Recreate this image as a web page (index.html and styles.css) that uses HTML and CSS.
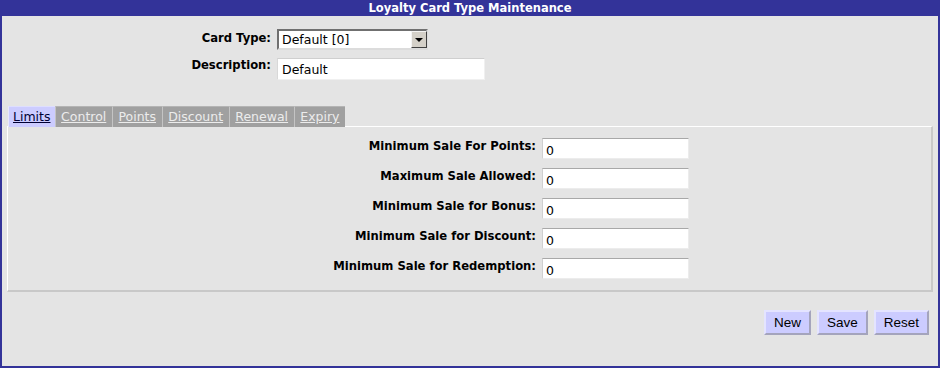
FILE: index.html
```html
<!DOCTYPE html>
<html lang="en">
<head>
    <meta charset="UTF-8">
    <title>Loyalty Card Type Maintenance</title>
    <link rel="stylesheet" href="styles.css">
</head>
<body>
    <div class="page">
        <div class="title-bar">Loyalty Card Type Maintenance</div>
        <div class="card-head">
            <label class="head-label">Card Type:</label>
            <span class="select-wrap">
                <select class="card-select">
                    <option>Default [0]</option>
                </select>
                <span class="select-arrow"></span>
            </span>
            <label class="head-label desc-label">Description:</label>
            <input type="text" class="desc-input" value="Default">
        </div>
        <div class="tab-box">
            <div class="tabs">
                <a href="#" class="tab active">Limits</a>
                <a href="#" class="tab">Control</a>
                <a href="#" class="tab">Points</a>
                <a href="#" class="tab">Discount</a>
                <a href="#" class="tab">Renewal</a>
                <a href="#" class="tab">Expiry</a>
            </div>
            <div class="tab-panel">
                <div class="field-grid">
                    <label>Minimum Sale For Points:</label>
                    <input type="text" value="0">
                    <label>Maximum Sale Allowed:</label>
                    <input type="text" value="0">
                    <label>Minimum Sale for Bonus:</label>
                    <input type="text" value="0">
                    <label>Minimum Sale for Discount:</label>
                    <input type="text" value="0">
                    <label>Minimum Sale for Redemption:</label>
                    <input type="text" value="0">
                </div>
            </div>
        </div>
        <div class="actions">
            <button>New</button>
            <button>Save</button>
            <button>Reset</button>
        </div>
    </div>
</body>
</html>
```

FILE: styles.css
```css
      body {
          margin: 0;
          padding: 0;
          font-family: 'DejaVu Sans', Verdana, sans-serif;
          background-color: #e4e4e4;
      }
      .page {
          box-sizing: border-box;
          height: 100vh;
          border: 2px solid #333399;
          border-top: none;
          background-color: #e4e4e4;
      }
      .title-bar {
          height: 16px;
          line-height: 16px;
          background-color: #333399;
          color: white;
          font-weight: bold;
          font-size: 11.5px;
          text-align: center;
      }
      .card-head {
          display: grid;
          grid-template-columns: 269px auto;
          column-gap: 6px;
          row-gap: 8px;
          margin-top: 13px;
          justify-items: start;
      }
      .head-label {
          justify-self: end;
          font-weight: bold;
          font-size: 11.6px;
          padding-top: 2px;
      }
      .desc-label {
          padding-top: 0;
      }
      .select-wrap {
          position: relative;
          display: block;
      }
      .card-select {
          appearance: none;
          -webkit-appearance: none;
          box-sizing: border-box;
          width: 151px;
          height: 21px;
          margin: 0;
          padding: 0 3px;
          font-family: 'DejaVu Sans', Verdana, sans-serif;
          font-size: 12.5px;
          color: black;
          background-color: white;
          border: 2px solid;
          border-color: #707070 #dcdcdc #dcdcdc #707070;
          border-radius: 0;
          outline: none;
      }
      .select-arrow {
          position: absolute;
          top: 2px;
          right: 1px;
          box-sizing: border-box;
          width: 16px;
          height: 17px;
          background-color: #d4d0c8;
          border: 1px solid;
          border-color: #f4f4f4 #404040 #404040 #f4f4f4;
          pointer-events: none;
      }
      .select-arrow::after {
          content: '';
          position: absolute;
          left: 3px;
          top: 6px;
          border-left: 4px solid transparent;
          border-right: 4px solid transparent;
          border-top: 4px solid black;
      }
      .desc-input {
          box-sizing: border-box;
          width: 208px;
          height: 22px;
          margin: 0;
          padding: 0 4px;
          font-family: 'DejaVu Sans', Verdana, sans-serif;
          font-size: 12.5px;
          background-color: white;
          border: 1px solid;
          border-color: #cfcfcf #f0f0f0 #f0f0f0 #d8d8d8;
          outline: none;
      }
      .tab-box {
          margin: 26px 5px 0;
      }
      .tabs {
          display: flex;
          padding-left: 1px;
          margin-bottom: -1px;
          position: relative;
      }
      .tab {
          box-sizing: border-box;
          height: 21px;
          line-height: 20px;
          padding: 0 5.6px;
          font-size: 12.5px;
          color: #ececec;
          background-color: #a0a0a0;
          border-top: 1px solid #b4b4b4;
          border-left: 1px solid #c4c4c4;
          text-decoration: underline;
      }
      .tab.active {
          padding: 0 4px;
          color: #000033;
          background-color: #ccccff;
          border-top-color: #dedeff;
          border-left-color: #e8e8ff;
      }
      .tab-panel {
          border: 1px solid white;
          border-right: 2px solid #c8c8c8;
          border-bottom: 2px solid #c8c8c8;
          padding: 11px 0 11px;
      }
      .field-grid {
          display: grid;
          grid-template-columns: 528px 147px;
          column-gap: 6px;
          row-gap: 9px;
      }
      .field-grid label {
          justify-self: end;
          font-weight: bold;
          font-size: 11.6px;
          padding-top: 1px;
      }
      .field-grid input {
          box-sizing: border-box;
          width: 147px;
          height: 21px;
          margin: 0;
          padding: 4px 3px 0;
          font-family: 'DejaVu Sans', Verdana, sans-serif;
          font-size: 12.5px;
          background-color: white;
          border: 1px solid;
          border-color: #a8a8a8 #ececec #ececec #d0d0d0;
          outline: none;
      }
      .actions {
          display: flex;
          justify-content: flex-end;
          gap: 6px;
          margin-top: 18px;
          padding-right: 9px;
      }
      button {
          box-sizing: border-box;
          height: 25px;
          padding: 0 8px;
          font-family: 'Liberation Sans', Arial, sans-serif;
          font-size: 13.5px;
          color: black;
          background-color: #ccccff;
          border: 2px solid;
          border-color: #e4e4ff #a4a4bc #a4a4bc #e4e4ff;
          cursor: pointer;
      }
      button:hover {
          background-color: #bbbbf0;
      }
```
